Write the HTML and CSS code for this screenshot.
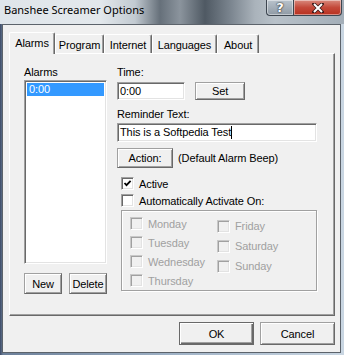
FILE: index.html
```html
<!DOCTYPE html>
<html lang="en">
<head>
    <meta charset="UTF-8">
    <title>Banshee Screamer Options</title>
    <link rel="stylesheet" href="styles.css">
</head>
<body>
    <div class="window">
        <!-- title bar -->
        <div class="titlebar">
            <span class="title">Banshee Screamer Options</span>
            <div class="caption-btns">
                <span class="cap help">?</span>
                <span class="cap close">
                    <svg width="12" height="10" viewBox="0 0 12 10">
                        <path d="M2 1 L10 9 M10 1 L2 9" stroke="#3a1a1a" stroke-width="3.6" stroke-linecap="square"/>
                        <path d="M2 1 L10 9 M10 1 L2 9" stroke="#fff" stroke-width="2"/>
                    </svg>
                </span>
            </div>
        </div>

        <div class="client">
            <!-- tabs -->
            <div class="tabs">
                <div class="tab active" style="width: 46px;">Alarms</div>
                <div class="tab" style="width: 49px;">Program</div>
                <div class="tab" style="width: 48px;">Internet</div>
                <div class="tab" style="width: 65px;">Languages</div>
                <div class="tab" style="width: 42px;">About</div>
            </div>

            <div class="panel">
                <div class="left-col">
                    <div class="label">Alarms</div>
                    <div class="listbox">
                        <div class="list-item selected">0:00</div>
                    </div>
                    <div class="btn-row">
                        <button class="btn small">New</button>
                        <button class="btn small">Delete</button>
                    </div>
                </div>

                <div class="right-col">
                    <div class="label">Time:</div>
                    <div class="row time-row">
                        <div class="field time-field">0:00</div>
                        <button class="btn set-btn">Set</button>
                    </div>

                    <div class="label reminder-label">Reminder Text:</div>
                    <div class="field text-field">This is a Softpedia Test<span class="caret"></span></div>

                    <div class="row action-row">
                        <button class="btn action-btn">Action:</button>
                        <span>(Default Alarm Beep)</span>
                    </div>

                    <div class="check first-check">
                        <span class="box">
                            <svg width="9" height="9" viewBox="0 0 9 9"><path d="M1.5 4 L3.5 6.2 L7.6 1.8" fill="none" stroke="#000" stroke-width="1.8"/></svg>
                        </span>
                        Active
                    </div>
                    <div class="check">
                        <span class="box"></span>
                        Automatically Activate On:
                    </div>

                    <!-- days, disabled -->
                    <div class="group">
                        <div class="day-col">
                            <div class="check day"><span class="box"></span>Monday</div>
                            <div class="check day"><span class="box"></span>Tuesday</div>
                            <div class="check day"><span class="box"></span>Wednesday</div>
                            <div class="check day"><span class="box"></span>Thursday</div>
                        </div>
                        <div class="day-col second">
                            <div class="check day"><span class="box"></span>Friday</div>
                            <div class="check day"><span class="box"></span>Saturday</div>
                            <div class="check day"><span class="box"></span>Sunday</div>
                        </div>
                    </div>
                </div>
            </div>

            <div class="footer">
                <button class="btn big default">OK</button>
                <button class="btn big">Cancel</button>
            </div>
        </div>
    </div>
</body>
</html>
```

FILE: styles.css
```css
/* whole window fills the 344x355 shot */
html, body {
    margin: 0;
    padding: 0;
    width: 344px;
    height: 355px;
    overflow: hidden;
}

.window {
    width: 344px;
    height: 355px;
    display: flex;
    flex-direction: column;
    background: linear-gradient(90deg, #3c4a66 0, #6b7f99 3px, #9fb2c6 50%, #c9d6e2 100%);
    font-family: "Liberation Sans", Arial, sans-serif;
    font-size: 11px;
    letter-spacing: -0.1px;
    color: #000;
}

/* blurred aero title bar */
.titlebar {
    height: 24px;
    flex: none;
    display: flex;
    justify-content: space-between;
    align-items: flex-start;
    background: linear-gradient(90deg, #dfe5ea 0, #e3e8ec 100px, #c2cad1 135px, #66707a 160px, #8b949d 180px, #4f5963 205px, #7a848e 230px, #aab3bb 255px, #b8c1c9 275px, #a3aeb8 344px);
}

.title {
    font-family: "Noto Sans", "Open Sans", sans-serif;
    font-size: 11px;
    letter-spacing: 0;
    line-height: 16px;
    padding: 2px 0 0 4px;
    color: #000;
}

.caption-btns {
    display: flex;
    margin-right: 2px;
}

.cap {
    height: 15px;
    display: flex;
    justify-content: center;
    align-items: center;
    border: 1px solid #3d4650;
    border-top: none;
    box-shadow: inset 0 0 0 1px rgb(255 255 255 / 45%);
}

.help {
    width: 26px;
    border-radius: 0 0 0 4px;
    border-right: none;
    background: linear-gradient(#b9c3cc, #8f9aa5);
    color: #fff;
    font: bold 13px "DejaVu Sans", sans-serif;
    text-shadow: 0 0 2px #222, 0 0 1px #222;
}

.close {
    width: 47px;
    border-radius: 0 0 4px 0;
    background: linear-gradient(#d98a7e, #c4493a 50%, #b8301f);
}

/* client area of the dialog */
.client {
    flex: 1;
    margin: 0 3px 2px 2px;
    border: 1px solid #5c636b;
    background: #f0f0f0;
    padding: 7px 5px 0 6px;
    display: flex;
    flex-direction: column;
}

.tabs {
    display: flex;
    align-items: flex-end;
}

.tab {
    height: 19px;
    box-sizing: border-box;
    text-align: center;
    padding-top: 4px;
    line-height: 13px;
    border: 1px solid;
    border-color: #fff #696969 transparent #fff;
    border-bottom: none;
    border-radius: 2px 2px 0 0;
    box-shadow: inset -1px 0 #a0a0a0;
}

.tab.active {
    height: 22px;
    margin-bottom: -1px;
    background: #f0f0f0;
    position: relative;
    z-index: 1;
}

.panel {
    height: 263px;
    box-sizing: border-box;
    border: 1px solid;
    border-color: #fff #696969 #696969 #fff;
    box-shadow: inset -1px -1px #a0a0a0;
    padding: 12px 0 0 14px;
    display: flex;
    gap: 10px;
}

.label {
    line-height: 13px;
}

.left-col {
    width: 83px;
}

.listbox,
.field,
.box {
    box-sizing: border-box;
    background: #fff;
    border: 1px solid;
    border-color: #a0a0a0 #fff #fff #a0a0a0;
    box-shadow: inset 1px 1px #696969, inset -1px -1px #e3e3e3;
}

.listbox {
    height: 184px;
    margin-top: 1px;
    padding: 2px;
}

.list-item {
    height: 13px;
    line-height: 13px;
    padding-left: 2px;
}

.list-item.selected {
    background: #3399ff;
    color: #fff;
}

.btn {
    box-sizing: border-box;
    font: 11px "Liberation Sans", Arial, sans-serif;
    letter-spacing: -0.1px;
    color: #000;
    background: #f0f0f0;
    border: 1px solid;
    border-color: #a0a0a0 #696969 #696969 #a0a0a0;
    box-shadow: inset 1px 1px #fff, inset -1px -1px #a0a0a0;
    padding: 0;
}

.btn-row {
    display: flex;
    gap: 7px;
    margin-top: 9px;
}

.btn.small {
    width: 38px;
    height: 21px;
}

.right-col {
    width: 200px;
    display: flex;
    flex-direction: column;
}

.row {
    display: flex;
    align-items: center;
}

.time-row {
    margin-top: 3px;
    gap: 10px;
}

.field {
    height: 18px;
    line-height: 16px;
    padding-left: 2px;
}

.time-field {
    width: 68px;
}

.set-btn {
    width: 50px;
    height: 18px;
}

.reminder-label {
    margin-top: 8px;
}

.text-field {
    height: 19px;
    line-height: 17px;
    margin-top: 2px;
}

.caret {
    display: inline-block;
    width: 1px;
    height: 13px;
    background: #000;
    vertical-align: -3px;
}

.action-row {
    margin-top: 6px;
    gap: 5px;
}

.action-btn {
    width: 56px;
    height: 20px;
}

.check {
    display: flex;
    align-items: center;
    gap: 5px;
    height: 17px;
    margin-left: 4px;
}

.first-check {
    margin-top: 7px;
}

.box {
    width: 13px;
    height: 13px;
    display: flex;
    justify-content: center;
    align-items: center;
}

/* group box with the weekdays, all disabled */
.group {
    width: 196px;
    height: 81px;
    box-sizing: border-box;
    margin: 1px 0 0 4px;
    border: 1px solid #a0a0a0;
    box-shadow: 1px 1px #fff, inset 1px 1px #fff;
    padding: 3px 0 0 8px;
    display: flex;
}

.day-col {
    width: 87px;
}

.day-col.second {
    margin-top: 2px;
}

.check.day {
    height: 19px;
    margin-left: 0;
    color: #a0a0a0;
}

.day-col.second .check.day {
    height: 20px;
}

.check.day .box {
    background: #f0f0f0;
    border-color: #c8c8c8 #fff #fff #c8c8c8;
    box-shadow: inset 1px 1px #a0a0a0, inset -1px -1px #e3e3e3;
}

.footer {
    display: flex;
    justify-content: flex-end;
    gap: 6px;
    margin-top: 6px;
}

.btn.big {
    width: 75px;
    height: 23px;
}

.btn.default {
    border-color: #696969;
    box-shadow: inset 1px 1px #fff, inset -1px -1px #696969, inset -2px -2px #a0a0a0;
}
```
